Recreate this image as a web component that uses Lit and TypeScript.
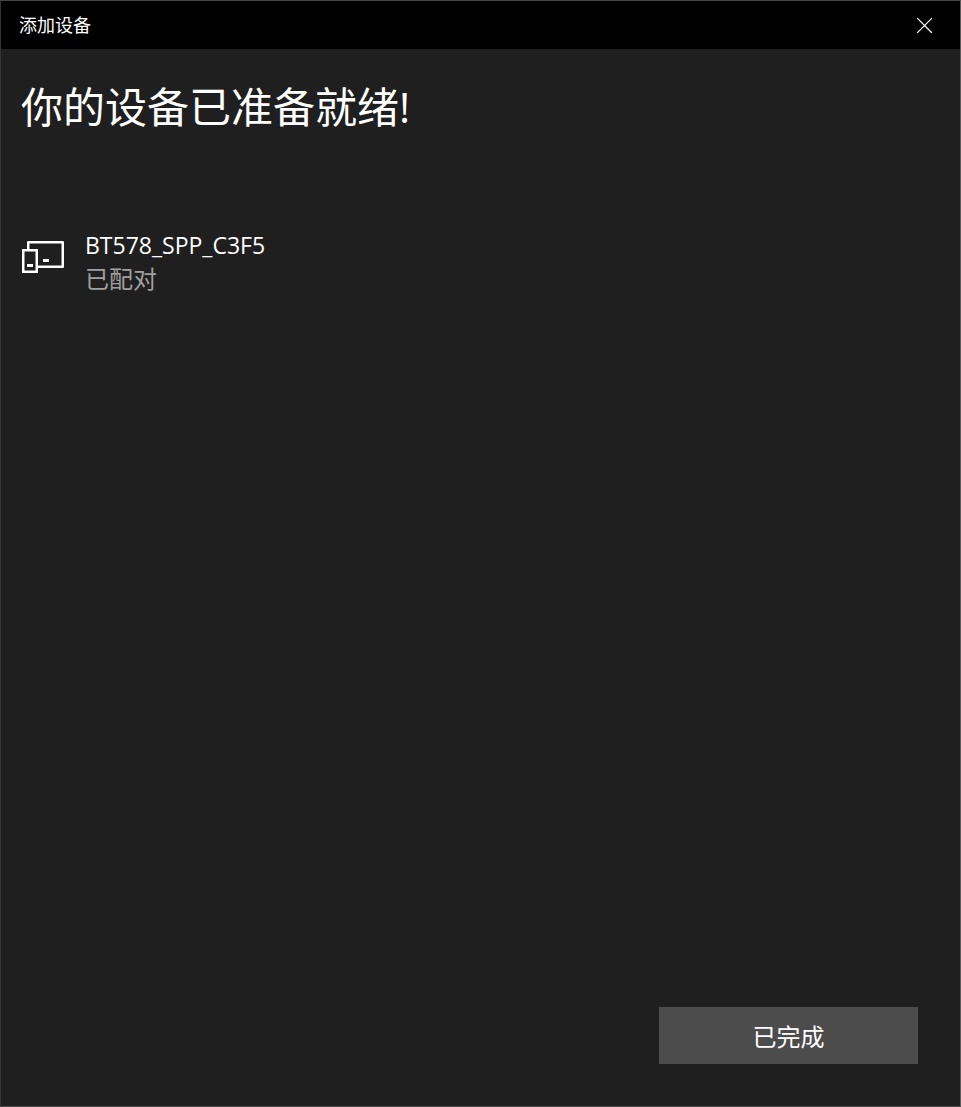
import { LitElement, html, css } from "lit";
import { customElement, property, state } from "lit/decorators.js";

interface Device {
  name: string;
  status: string;
}

@customElement("device-row")
class DeviceRow extends LitElement {
  @property() name = "";
  @property() status = "";

  static styles = css`
    :host {
      display: flex;
      align-items: flex-start;
      gap: 20px;
    }
    .icon {
      flex: none;
      width: 44px;
      height: 33px;
      margin-top: 11px;
    }
    .name,
    .status {
      margin: 0;
      line-height: 33px;
    }
    .name {
      color: #fff;
      font-size: 23px;
    }
    .status {
      color: #a0a0a0;
      font-size: 24px;
    }
  `;

  render() {
    return html`
      <svg class="icon" viewBox="0 0 44 33" aria-hidden="true">
        <path d="M7.25 9V2.25H41.75V26.75H16" fill="none" stroke="#fff" stroke-width="2.5" stroke-linejoin="round" />
        <rect x="2.25" y="10.25" width="13.5" height="21.5" fill="none" stroke="#fff" stroke-width="2.5" />
        <path d="M6 24h6v3H6zM22 19h6v3h-6z" fill="#fff" />
      </svg>
      <div>
        <p class="name">${this.name}</p>
        <p class="status">${this.status}</p>
      </div>
    `;
  }
}

@customElement("app-root")
class AppRoot extends LitElement {
  @state() private devices: Device[] = [{ name: "BT578_SPP_C3F5", status: "已配对" }];

  static styles = css`
    :host {
      display: flex;
      flex-direction: column;
      box-sizing: border-box;
      min-height: 100vh;
      border: 1px solid;
      border-color: #464646 #5c5c5c #4a4a4a #3a3632;
      background: #1f1f1f;
      color: #fff;
      font-family: "Open Sans", "Noto Sans CJK SC", sans-serif;
    }
    .titlebar {
      display: flex;
      align-items: center;
      justify-content: space-between;
      height: 48px;
      padding-left: 18px;
      background: #000;
    }
    .caption {
      font-size: 18px;
      line-height: 24px;
    }
    .close {
      display: flex;
      align-items: center;
      justify-content: center;
      width: 70px;
      height: 48px;
      padding: 0;
      border: 0;
      background: none;
    }
    .close svg {
      width: 16px;
      height: 16px;
    }
    .content {
      flex: 1;
      padding: 24px 20px;
    }
    h1 {
      margin: 0 0 88px;
      font-size: 42px;
      font-weight: 400;
      line-height: 68px;
    }
    .devices {
      margin: 0;
      padding: 0;
      list-style: none;
    }
    .footer {
      display: flex;
      justify-content: flex-end;
      padding: 0 42px 42px;
    }
    .done {
      width: 259px;
      height: 57px;
      padding: 0;
      border: 0;
      background: #4c4c4c;
      color: #fff;
      font: inherit;
      font-size: 24px;
    }
  `;

  render() {
    return html`
      <header class="titlebar">
        <span class="caption">添加设备</span>
        <button class="close" type="button" aria-label="关闭">
          <svg viewBox="0 0 16 16" aria-hidden="true">
            <path d="M.5 1.5l14 14M14.5 1.5l-14 14" fill="none" stroke="#fff" stroke-width="1.2" stroke-linecap="square" />
          </svg>
        </button>
      </header>
      <main class="content">
        <h1>你的设备已准备就绪!</h1>
        <ul class="devices">
          ${this.devices.map(
            (d) => html`<li><device-row .name=${d.name} .status=${d.status}></device-row></li>`
          )}
        </ul>
      </main>
      <footer class="footer">
        <button class="done" type="button">已完成</button>
      </footer>
    `;
  }
}
